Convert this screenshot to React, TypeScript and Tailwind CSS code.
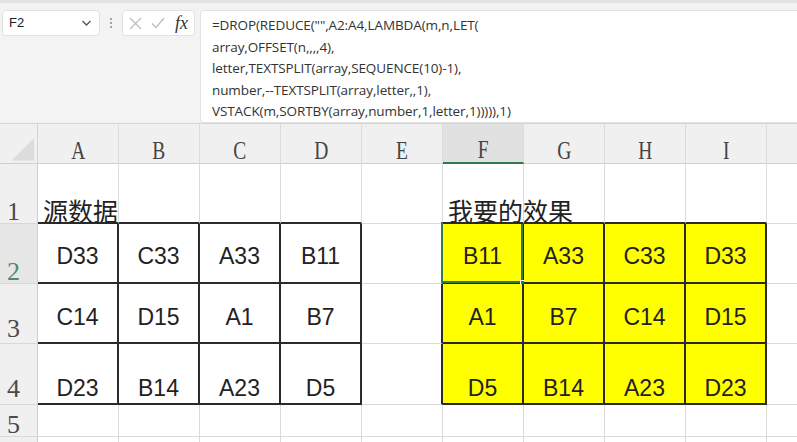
import React from "react";

const COLS = ["A", "B", "C", "D", "E", "F", "G", "H", "I"];

const left: string[][] = [
  ["D33", "C33", "A33", "B11"],
  ["C14", "D15", "A1", "B7"],
  ["D23", "B14", "A23", "D5"],
];
const right: string[][] = [
  ["B11", "A33", "C33", "D33"],
  ["A1", "B7", "C14", "D15"],
  ["D5", "B14", "A23", "D23"],
];

const formula = [
  '=DROP(REDUCE("",A2:A4,LAMBDA(m,n,LET(',
  "array,OFFSET(n,,,,4),",
  "letter,TEXTSPLIT(array,SEQUENCE(10)-1),",
  "number,--TEXTSPLIT(array,letter,,1),",
  "VSTACK(m,SORTBY(array,number,1,letter,1))))),1)",
];

const rowHeights = ["h-[60px]", "h-[60px]", "h-[60px]", "h-[61px]", "h-[32px]", "h-[20px]"];

function inTable(r: number, c: number) {
  return r >= 2 && r <= 4 && ((c >= 0 && c <= 3) || (c >= 5 && c <= 8));
}

function DataCell({ r, c }: { r: number; c: number }) {
  const t = inTable(r, c);
  const above = inTable(r + 1, c);
  const leftOf = inTable(r, c + 1);
  const rightCls = t || leftOf ? "border-r-2 border-r-[#2a2a2a]" : "border-r border-r-[#dadada]";
  const bottomCls = t || above ? "border-b-2 border-b-[#2a2a2a]" : "border-b border-b-[#dadada]";
  const yellow = t && c >= 5;
  let text = "";
  if (t) {
    text = c <= 3 ? left[r - 2][c] : right[r - 2][c - 5];
  }
  const align =
    r === 2
      ? "items-center pt-[6px]"
      : r === 3
      ? "items-center pt-[8px]"
      : r === 4
      ? "items-end pb-[3px]"
      : "items-end";
  const selected = r === 2 && c === 5;
  return (
    <div
      className={`relative w-[81px] shrink-0 h-full flex justify-center ${align} ${rightCls} ${bottomCls} ${
        yellow ? "bg-[#ffff00]" : "bg-white"
      }`}
    >
      {text && (
        <span className="text-[23px] leading-none text-[#222] font-['Liberation_Sans',Arial,sans-serif]">
          {text}
        </span>
      )}
      {selected && (
        <>
          <div className="absolute left-[-2px] top-[-2px] right-[-1px] bottom-[-1px] border-2 border-[#2f7a45]" />
          <div className="absolute right-[-4px] bottom-[-4px] w-[6px] h-[6px] bg-[#2f7a45] border border-white" />
        </>
      )}
    </div>
  );
}

function RowHeader({ r }: { r: number }) {
  const sel = r === 2;
  const pb = r === 3 ? "pb-[3px]" : r === 4 ? "pb-[4px]" : "pb-0";
  return (
    <div
      className={`w-[38px] shrink-0 h-full flex items-end pl-[7px] ${pb} border-r border-r-[#cfcfcf] border-b border-b-[#d8d8d8] ${
        sel ? "bg-[#e6e6e6] text-[#4f8a6e]" : "bg-[#f0f0f0] text-[#4a4a4a]"
      }`}
    >
      {r <= 5 && (
        <span className="text-[26px] leading-[22px] font-['Liberation_Serif','Times_New_Roman',serif]">{r}</span>
      )}
    </div>
  );
}

export default function App() {
  return (
    <div className="w-[797px] h-[442px] overflow-hidden bg-white font-['Liberation_Sans',Arial,sans-serif]">
      {/* Formula bar */}
      <div className="h-[124px] bg-[#f3f3f3] border-t-[3px] border-t-[#e2e2e2] border-b border-b-[#d4d4d4] flex items-start pt-[7px]">
        <div className="ml-[2px] w-[98px] h-[26px] bg-white border border-[#e2e2e2] rounded-[4px] flex items-center pl-[6px] pr-[6px] justify-between">
          <span className="text-[13px] text-[#222]">F2</span>
          <svg width="11" height="8" viewBox="0 0 11 8" className="mr-[1px]">
            <path d="M1.5 2 L5.5 6 L9.5 2" fill="none" stroke="#555" strokeWidth="1.3" />
          </svg>
        </div>
        <div className="w-[22px] h-[26px] flex flex-col items-center justify-center gap-[2px]">
          <span className="w-[2px] h-[2px] bg-[#8a8a8a] rounded-full" />
          <span className="w-[2px] h-[2px] bg-[#8a8a8a] rounded-full" />
          <span className="w-[2px] h-[2px] bg-[#8a8a8a] rounded-full" />
        </div>
        <div className="w-[73px] h-[26px] bg-white border border-[#e2e2e2] rounded-[4px] flex items-center pl-[6px] gap-[9px]">
          <svg width="13" height="13" viewBox="0 0 13 13">
            <path d="M1 1 L12 12 M12 1 L1 12" stroke="#bdbdbd" strokeWidth="1.2" fill="none" />
          </svg>
          <svg width="14" height="12" viewBox="0 0 14 12">
            <path d="M1 6.5 L5 10.5 L13 1" stroke="#bdbdbd" strokeWidth="1.2" fill="none" />
          </svg>
          <span className="italic text-[18px] leading-none text-[#333] font-['Liberation_Serif','Times_New_Roman',serif] ml-[1px]">
            fx
          </span>
        </div>
        <div className="ml-[5px] flex-1 h-[113px] bg-white border border-r-0 border-[#e2e2e2] rounded-l-[4px] pl-[11px] pt-[4px]">
          {formula.map((l, i) => (
            <div
              key={i}
              className="text-[13.5px] leading-[21.5px] text-[#333] whitespace-pre font-['Open_Sans','Noto_Sans',sans-serif] tracking-[-0.1px]"
            >
              {l}
            </div>
          ))}
        </div>
      </div>

      {/* Column header */}
      <div className="h-[40px] flex bg-[#f0f0f0]">
        <div className="w-[38px] shrink-0 h-full border-r border-r-[#d4d4d4] border-b border-b-[#cfcfcf] flex items-end justify-end">
          <svg width="38" height="39" viewBox="0 0 38 39">
            <polygon points="12,37 35,14 35,37" fill="#dcdcdc" />
          </svg>
        </div>
        {COLS.map((c) => (
          <div
            key={c}
            className={`w-[81px] shrink-0 h-full flex items-end justify-center pb-[1px] border-r border-r-[#dcdcdc] ${
              c === "F" ? "bg-[#e1e1e1] border-b-2 border-b-[#2f7a45]" : "border-b border-b-[#cfcfcf]"
            }`}
          >
            <span className="inline-block scale-x-[0.75] text-[26px] leading-[22px] text-[#444] font-['Liberation_Serif','Times_New_Roman',serif]">
              {c}
            </span>
          </div>
        ))}
        <div className="flex-1 h-full border-b border-b-[#cfcfcf]" />
      </div>

      {/* Rows */}
      {[1, 2, 3, 4, 5, 6].map((r) => (
        <div key={r} className={`${rowHeights[r - 1]} flex`}>
          <RowHeader r={r} />
          {COLS.map((_, c) =>
            r === 1 && (c === 0 || c === 5) ? (
              <div
                key={c}
                className="relative z-10 w-[81px] shrink-0 h-full flex items-end border-r border-r-[#dadada] border-b-2 border-b-[#2a2a2a] bg-white"
              >
                <span className="absolute left-[5px] bottom-[-1px] whitespace-nowrap text-[25px] leading-none text-[#222] font-['Noto_Sans_CJK_SC','Noto_Sans_CJK_JP',sans-serif]">
                  {c === 0 ? "源数据" : "我要的效果"}
                </span>
              </div>
            ) : (
              <DataCell key={c} r={r} c={c} />
            )
          )}
          <div className="flex-1 h-full border-b border-b-[#dadada] bg-white" />
        </div>
      ))}
    </div>
  );
}
